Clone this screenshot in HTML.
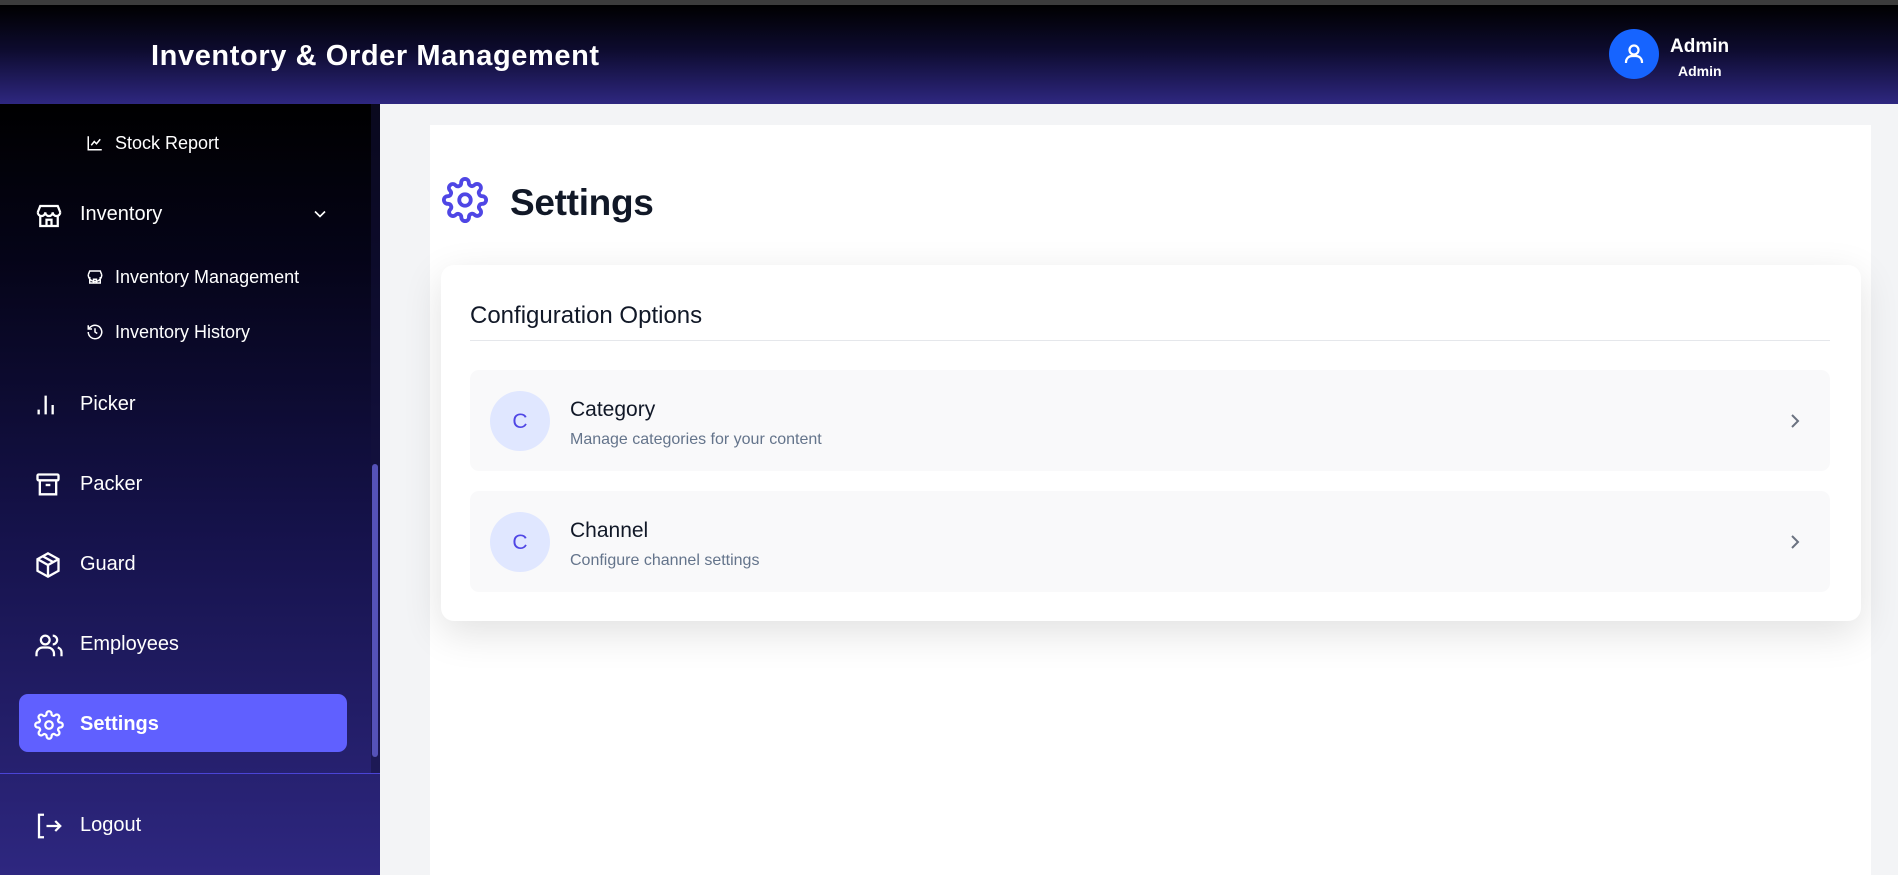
<!DOCTYPE html>
<html><head><meta charset="utf-8"><style>
*{box-sizing:border-box;margin:0;padding:0}
body{width:1898px;height:875px;overflow:hidden;font-family:"Liberation Sans",sans-serif;background:#f3f4f6;position:relative}
.top{position:absolute;left:0;top:0;width:1898px;height:5px;background:#3c3c3c}
.hdr{position:absolute;left:0;top:5px;width:1898px;height:99px;background:linear-gradient(#000 0%,#0d0b2e 45%,#2e2780 100%)}
.title{position:absolute;left:151px;top:40px;color:#fff;font-size:29px;font-weight:bold;letter-spacing:0.6px}
.av{position:absolute;left:1609px;top:29px;width:50px;height:50px;border-radius:50%;background:#1664ff}
.an{position:absolute;left:1670px;top:36px;color:#fff;font-size:19px;font-weight:bold}
.as{position:absolute;left:1678px;top:63px;color:#fff;font-size:14px;font-weight:bold}
.side{position:absolute;left:0;top:104px;width:380px;height:771px;background:linear-gradient(#000 0%,#050418 20%,#15124a 55%,#2e2780 100%)}
.sb{position:absolute;left:371px;top:104px;width:9px;height:670px;background:rgba(20,18,60,.5)}
.thumb{position:absolute;left:372px;top:464px;width:6px;height:293px;border-radius:3px;background:#5552b8}
.sep{position:absolute;left:0;top:773px;width:380px;height:1px;background:#4b44d6}
.it{position:absolute;color:#fff;display:flex;align-items:center}
.it svg{position:absolute}
.act{position:absolute;left:19px;top:694px;width:328px;height:58px;border-radius:9px;background:#6060ff}
.panel{position:absolute;left:430px;top:125px;width:1441px;height:750px;background:#fff}
.card{position:absolute;left:441px;top:265px;width:1420px;height:356px;background:#fff;border-radius:13px;box-shadow:0 12px 40px rgba(0,0,0,.12)}
.row{position:absolute;left:470px;width:1360px;height:101px;background:#f9f9fa;border-radius:9px}
.circ{position:absolute;left:20px;top:21px;width:60px;height:60px;border-radius:50%;background:#e0e7ff;color:#4f46e5;font-size:21px;text-align:center;line-height:62px}
.rt{position:absolute;left:100px;top:28px;font-size:21px;color:#111827}
.rs{position:absolute;left:100px;top:61px;font-size:16px;color:#64748b}
</style></head><body>
<div class="top"></div>
<div class="hdr"></div>
<div class="title">Inventory &amp; Order Management</div>
<div class="av"><svg width="50" height="50" viewBox="0 0 50 50" fill="none" stroke="#fff" stroke-width="2.2"><circle cx="25" cy="21" r="4.5"/><path d="M17 34v-1a6 6 0 0 1 6-6h4a6 6 0 0 1 6 6v1"/></svg></div>
<div class="an">Admin</div><div class="as">Admin</div>

<div class="side"></div>
<div class="sb"></div><div class="thumb"></div>
<div class="sep"></div>
<div class="act"></div>

<div class="it" style="left:86px;top:133px;font-size:18px"><svg width="18" height="18" viewBox="0 0 24 24" fill="none" stroke="#fff" stroke-width="2" style="left:0;top:1px"><path d="M3 3v18h18"/><path d="M7 15l4-5 3 3 5-6"/></svg><span style="margin-left:29px">Stock Report</span></div>
<div class="it" style="left:34px;top:203px;font-size:20px"><svg width="30" height="30" viewBox="0 0 24 24" fill="none" stroke="#fff" stroke-width="1.8" style="left:0;top:-2px"><path d="M3 9l2-5h14l2 5"/><path d="M3 9a3 3 0 0 0 6 0 3 3 0 0 0 6 0 3 3 0 0 0 6 0"/><path d="M5 12v8h14v-8"/><path d="M10 20v-5h4v5"/></svg><span style="margin-left:46px">Inventory</span></div>
<svg width="20" height="20" viewBox="0 0 24 24" fill="none" stroke="#fff" stroke-width="2" style="position:absolute;left:310px;top:204px"><path d="M6 9l6 6 6-6"/></svg>
<div class="it" style="left:86px;top:267px;font-size:18px"><svg width="18" height="18" viewBox="0 0 24 24" fill="none" stroke="#fff" stroke-width="2" style="left:0;top:1px"><path d="M3 9l2-5h14l2 5"/><path d="M3 9a3 3 0 0 0 18 0"/><path d="M5 12v8h14v-8"/><path d="M10 20v-5h4v5"/></svg><span style="margin-left:29px">Inventory Management</span></div>
<div class="it" style="left:86px;top:322px;font-size:18px"><svg width="18" height="18" viewBox="0 0 24 24" fill="none" stroke="#fff" stroke-width="2" style="left:0;top:1px"><path d="M3 12a9 9 0 1 0 3-6.7L3 8"/><path d="M3 3v5h5"/><path d="M12 7v5l3 2"/></svg><span style="margin-left:29px">Inventory History</span></div>
<div class="it" style="left:34px;top:393px;font-size:20px"><svg width="28" height="28" viewBox="0 0 24 24" fill="none" stroke="#fff" stroke-width="2" style="left:0;top:-2px"><path d="M4 20v-4M10 20V4M16 20v-8"/></svg><span style="margin-left:46px">Picker</span></div>
<div class="it" style="left:34px;top:473px;font-size:20px"><svg width="28" height="28" viewBox="0 0 24 24" fill="none" stroke="#fff" stroke-width="2" style="left:0;top:-2px"><rect x="3" y="3" width="18" height="5" rx="1"/><path d="M5 8v12h14V8"/><path d="M10 12h4"/></svg><span style="margin-left:46px">Packer</span></div>
<div class="it" style="left:34px;top:553px;font-size:20px"><svg width="28" height="28" viewBox="0 0 24 24" fill="none" stroke="#fff" stroke-width="2" style="left:0;top:-2px"><path d="M12 2l9 5v10l-9 5-9-5V7z"/><path d="M3 7l9 5 9-5M12 12v10M7.5 4.5l9 5"/></svg><span style="margin-left:46px">Guard</span></div>
<div class="it" style="left:34px;top:633px;font-size:20px"><svg width="30" height="30" viewBox="0 0 24 24" fill="none" stroke="#fff" stroke-width="1.8" style="left:0;top:-3px"><circle cx="9" cy="8" r="3.5"/><path d="M2 21v-2a5 5 0 0 1 5-5h4a5 5 0 0 1 5 5v2"/><path d="M15 4.5a3.5 3.5 0 0 1 0 7M19 14a4 4 0 0 1 3 4v3"/></svg><span style="margin-left:46px">Employees</span></div>
<div class="it" style="left:34px;top:713px;font-size:20px;font-weight:bold"><svg width="30" height="30" viewBox="0 0 24 24" fill="none" stroke="#fff" stroke-width="1.8" style="left:0;top:-3px"><circle cx="12" cy="12" r="3"/><path d="M19.4 15a1.65 1.65 0 0 0 .33 1.82l.06.06a2 2 0 1 1-2.83 2.83l-.06-.06a1.65 1.65 0 0 0-1.82-.33 1.65 1.65 0 0 0-1 1.51V21a2 2 0 1 1-4 0v-.09A1.65 1.65 0 0 0 9 19.4a1.650 1.65 0 0 0-1.82.33l-.06.06a2 2 0 1 1-2.83-2.83l.06-.06A1.65 1.65 0 0 0 4.68 15a1.65 1.65 0 0 0-1.51-1H3a2 2 0 1 1 0-4h.09A1.65 1.65 0 0 0 4.6 9a1.65 1.65 0 0 0-.33-1.82l-.06-.06a2 2 0 1 1 2.83-2.83l.06.06A1.65 1.65 0 0 0 9 4.68a1.65 1.65 0 0 0 1-1.51V3a2 2 0 1 1 4 0v.09a1.65 1.65 0 0 0 1 1.51 1.65 1.65 0 0 0 1.82-.33l.06-.06a2 2 0 1 1 2.83 2.83l-.06.06A1.65 1.65 0 0 0 19.4 9a1.65 1.65 0 0 0 1.51 1H21a2 2 0 1 1 0 4h-.09a1.65 1.65 0 0 0-1.51 1z"/></svg><span style="margin-left:46px">Settings</span></div>
<div class="it" style="left:34px;top:814px;font-size:20px"><svg width="30" height="30" viewBox="0 0 24 24" fill="none" stroke="#fff" stroke-width="1.8" style="left:0;top:-3px"><path d="M8 3H4v18h4"/><path d="M10 12h11M17 8l4 4-4 4"/></svg><span style="margin-left:46px">Logout</span></div>

<div class="panel"></div>
<svg width="46" height="46" viewBox="0 0 24 24" fill="none" stroke="#4f46e5" stroke-width="2" style="position:absolute;left:442px;top:177px"><circle cx="12" cy="12" r="3"/><path d="M19.4 15a1.65 1.65 0 0 0 .33 1.82l.06.06a2 2 0 1 1-2.830 2.83l-.06-.06a1.65 1.65 0 0 0-1.82-.33 1.65 1.65 0 0 0-1 1.51V21a2 2 0 1 1-4 0v-.09A1.65 1.65 0 0 0 9 19.4a1.65 1.65 0 0 0-1.82.33l-.06.06a2 2 0 1 1-2.83-2.83l.06-.06A1.65 1.65 0 0 0 4.68 15a1.65 1.65 0 0 0-1.51-1H3a2 2 0 1 1 0-4h.09A1.65 1.65 0 0 0 4.6 9a1.65 1.65 0 0 0-.33-1.82l-.06-.06a2 2 0 1 1 2.83-2.83l.06.06A1.650 1.65 0 0 0 9 4.68a1.65 1.65 0 0 0 1-1.51V3a2 2 0 1 1 4 0v.09a1.65 1.65 0 0 0 1 1.51 1.65 1.65 0 0 0 1.82-.33l.06-.06a2 2 0 1 1 2.83 2.83l-.06.06A1.65 1.65 0 0 0 19.4 9a1.65 1.65 0 0 0 1.51 1H21a2 2 0 1 1 0 4h-.09a1.65 1.65 0 0 0-1.51 1z"/></svg>
<div style="position:absolute;left:510px;top:182px;font-size:37px;font-weight:900;color:#111827;letter-spacing:-0.3px">Settings</div>

<div class="card"></div>
<div style="position:absolute;left:470px;top:302px;font-size:24px;color:#111827">Configuration Options</div>
<div style="position:absolute;left:470px;top:340px;width:1360px;height:1px;background:#e5e7eb"></div>
<div class="row" style="top:370px"><div class="circ">C</div><div class="rt">Category</div><div class="rs">Manage categories for your content</div>
<svg width="24" height="24" viewBox="0 0 24 24" fill="none" stroke="#6b7280" stroke-width="2" style="position:absolute;left:1313px;top:39px"><path d="M9 6l6 6-6 6"/></svg></div>
<div class="row" style="top:491px"><div class="circ">C</div><div class="rt">Channel</div><div class="rs">Configure channel settings</div>
<svg width="24" height="24" viewBox="0 0 24 24" fill="none" stroke="#6b7280" stroke-width="2" style="position:absolute;left:1313px;top:39px"><path d="M9 6l6 6-6 6"/></svg></div>
</body></html>
